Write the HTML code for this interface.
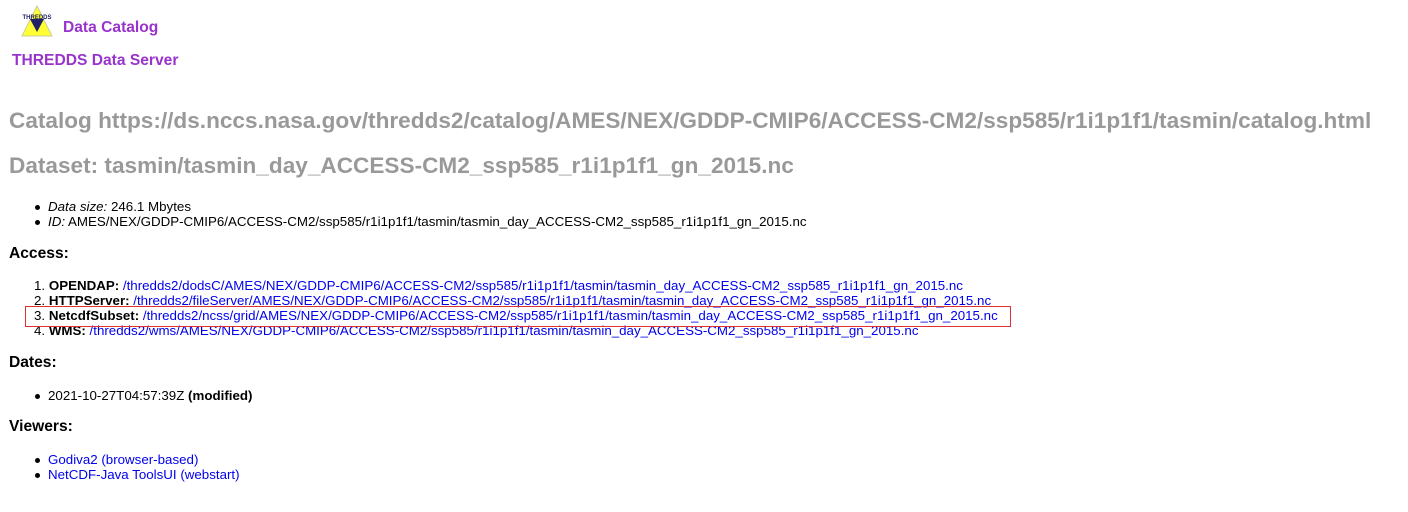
<!DOCTYPE html>
<html><head><style>
body{margin:0;width:1408px;height:512px;background:#fff;font-family:"Liberation Sans",Arial,sans-serif;position:relative;overflow:hidden}
.a{position:absolute;white-space:nowrap;line-height:1}
.p{color:#9933cc;font-weight:bold;font-size:15.6px}
.h1{color:#999;font-weight:bold;font-size:22.6px;left:9px}
.h3{font-weight:bold;font-size:15.6px;left:9px;color:#000}
.t{font-size:13.33px;color:#000}
a{color:#0000ee;text-decoration:none}
.b{position:absolute;width:5px;height:5px;background:#000;border-radius:50%;left:35px}
</style></head><body>
<svg class="a" style="left:21px;top:5px" width="32" height="32" viewBox="0 0 32 32"><polygon points="16,1 31,31 1,31" fill="#ffff33" stroke="#cc9"/><polygon points="9,14 23,14 16,27" fill="#222266"/><text x="16" y="14" font-size="6" font-weight="bold" text-anchor="middle" fill="#222266" font-family="Liberation Sans">THREDDS</text></svg>
<div class="a p" style="left:63px;top:20px">Data Catalog</div>
<div class="a p" style="left:12px;top:53px">THREDDS Data Server</div>
<div class="a h1" style="top:110px">Catalog https://ds.nccs.nasa.gov/thredds2/catalog/AMES/NEX/GDDP-CMIP6/ACCESS-CM2/ssp585/r1i1p1f1/tasmin/catalog.html</div>
<div class="a h1" style="top:155px">Dataset: tasmin/tasmin_day_ACCESS-CM2_ssp585_r1i1p1f1_gn_2015.nc</div>
<div class="b" style="top:205px"></div><div class="a t" style="left:48px;top:200px"><i>Data size:</i> 246.1 Mbytes</div>
<div class="b" style="top:220px"></div><div class="a t" style="left:48px;top:215px"><i>ID:</i> AMES/NEX/GDDP-CMIP6/ACCESS-CM2/ssp585/r1i1p1f1/tasmin/tasmin_day_ACCESS-CM2_ssp585_r1i1p1f1_gn_2015.nc</div>
<div class="a h3" style="top:246px">Access:</div>
<div class="a t" style="left:34px;top:279px">1. <b>OPENDAP:</b> <a>/thredds2/dodsC/AMES/NEX/GDDP-CMIP6/ACCESS-CM2/ssp585/r1i1p1f1/tasmin/tasmin_day_ACCESS-CM2_ssp585_r1i1p1f1_gn_2015.nc</a></div>
<div class="a t" style="left:34px;top:294px">2. <b>HTTPServer:</b> <a>/thredds2/fileServer/AMES/NEX/GDDP-CMIP6/ACCESS-CM2/ssp585/r1i1p1f1/tasmin/tasmin_day_ACCESS-CM2_ssp585_r1i1p1f1_gn_2015.nc</a></div>
<div class="a t" style="left:34px;top:309px">3. <b>NetcdfSubset:</b> <a>/thredds2/ncss/grid/AMES/NEX/GDDP-CMIP6/ACCESS-CM2/ssp585/r1i1p1f1/tasmin/tasmin_day_ACCESS-CM2_ssp585_r1i1p1f1_gn_2015.nc</a></div>
<div class="a t" style="left:34px;top:324px">4. <b>WMS:</b> <a>/thredds2/wms/AMES/NEX/GDDP-CMIP6/ACCESS-CM2/ssp585/r1i1p1f1/tasmin/tasmin_day_ACCESS-CM2_ssp585_r1i1p1f1_gn_2015.nc</a></div>
<div class="a" style="left:25px;top:306px;width:984px;height:19px;border:1px solid #e03030"></div>
<div class="a h3" style="top:355px">Dates:</div>
<div class="b" style="top:394px"></div><div class="a t" style="left:48px;top:389px">2021-10-27T04:57:39Z <b>(modified)</b></div>
<div class="a h3" style="top:419px">Viewers:</div>
<div class="b" style="top:458px"></div><div class="a t" style="left:48px;top:453px"><a>Godiva2 (browser-based)</a></div>
<div class="b" style="top:473px"></div><div class="a t" style="left:48px;top:468px"><a>NetCDF-Java ToolsUI (webstart)</a></div>
</body></html>
